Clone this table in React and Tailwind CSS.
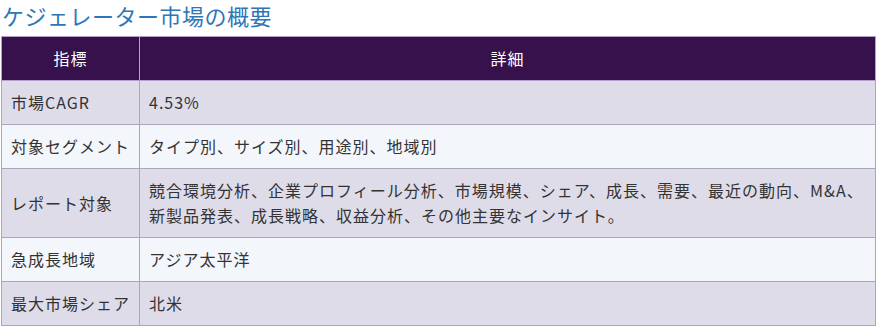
export default function App() {
  const rows = [
    ["市場CAGR", ["4.53%"]],
    ["対象セグメント", ["タイプ別、サイズ別、用途別、地域別"]],
    [
      "レポート対象",
      [
        "競合環境分析、企業プロフィール分析、市場規模、シェア、成長、需要、最近の動向、M&A、",
        "新製品発表、成長戦略、収益分析、その他主要なインサイト。",
      ],
    ],
    ["急成長地域", ["アジア太平洋"]],
    ["最大市場シェア", ["北米"]],
  ];
  return (
    <div
      className="w-[880px] h-[336px] bg-white overflow-hidden"
      style={{ fontFamily: '"Noto Sans CJK JP", "Noto Sans", sans-serif' }}
    >
      <div className="pl-[2px] pt-px text-[22px] leading-[28px] tracking-[0.5px] text-[#2f76b8] font-normal">
        ケジェレーター市場の概要
      </div>
      <table className="mt-[7px] ml-px w-[875px] border-collapse text-[16px] tracking-[1px] text-[#333]">
        <thead>
          <tr className="bg-[#36114b] text-white">
            <th className="w-[137px] h-[44px] border border-[#b89fcb] font-normal text-center leading-[25px]">
              指標
            </th>
            <th className="h-[44px] border border-[#b89fcb] font-normal text-center leading-[25px]">
              詳細
            </th>
          </tr>
        </thead>
        <tbody>
          {rows.map(([k, v], i) => (
            <tr key={i} className={i % 2 === 0 ? "bg-[#dfdcea]" : "bg-[#f3f6fb]"}>
              <td className="border border-[#aaa6bd] px-[9px] py-[9px] leading-[25px] align-middle whitespace-nowrap">
                {k}
              </td>
              <td className="border border-[#aaa6bd] pl-[9px] pr-[10px] py-[9px] leading-[25px] align-middle">
                {v.map((line, j) => (
                  <div key={j} className="whitespace-nowrap">
                    {line}
                  </div>
                ))}
              </td>
            </tr>
          ))}
        </tbody>
      </table>
    </div>
  );
}
